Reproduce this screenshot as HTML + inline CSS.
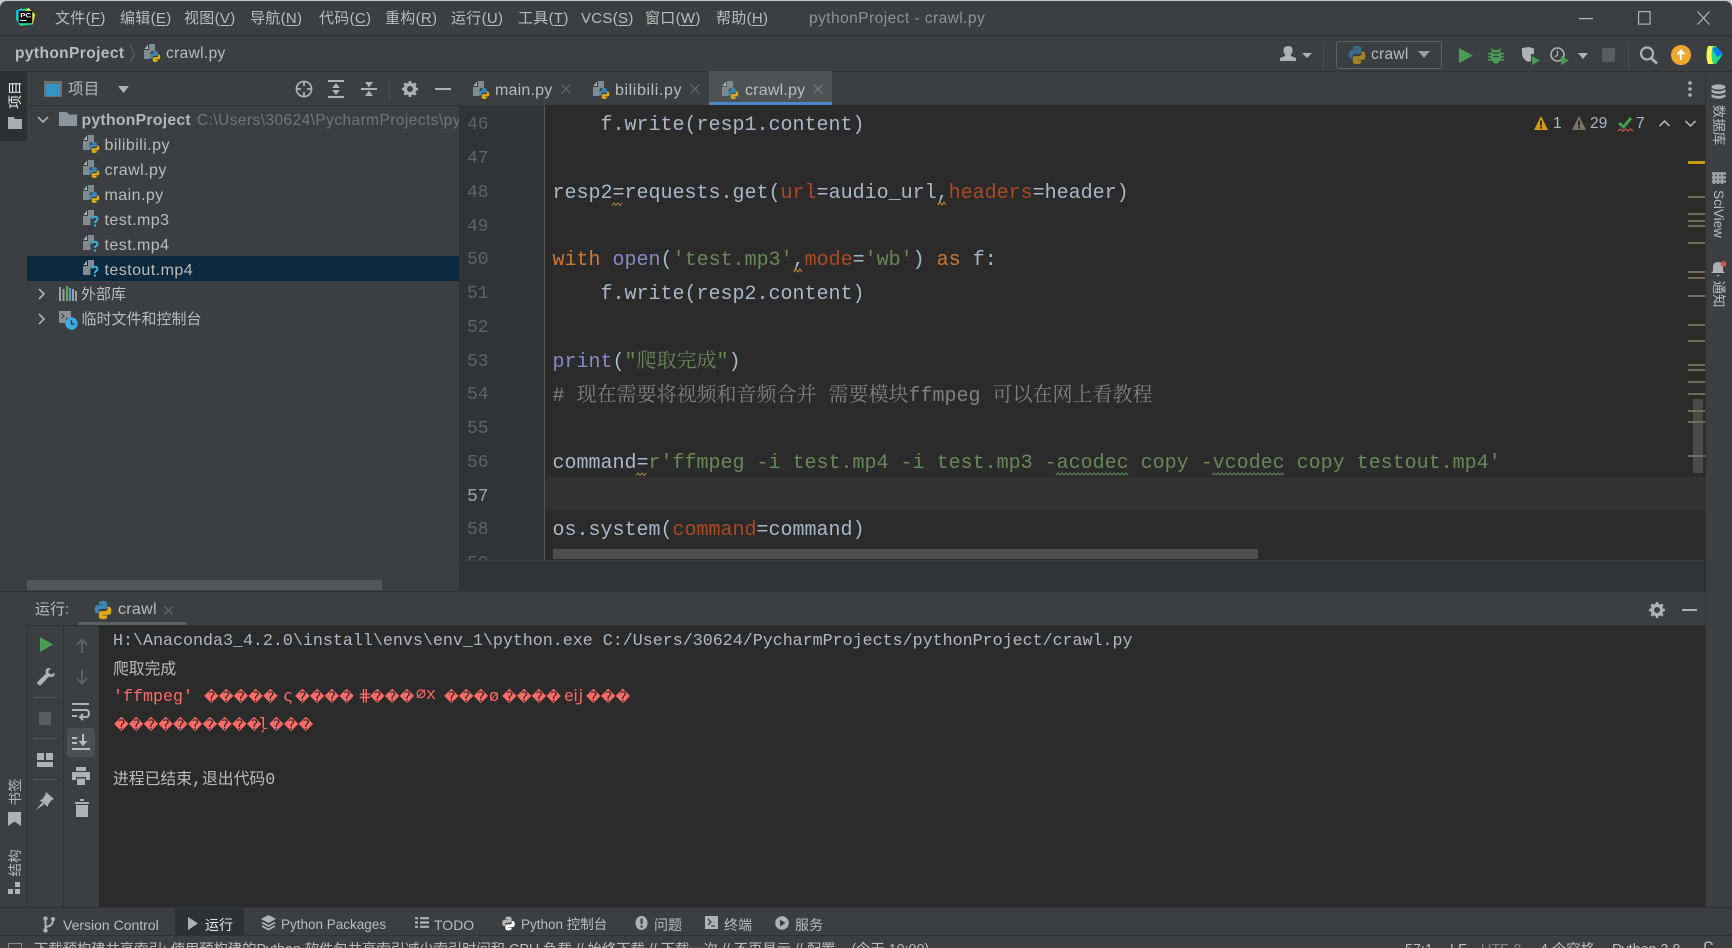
<!DOCTYPE html>
<html lang="zh"><head><meta charset="utf-8"><title>pythonProject - crawl.py</title>
<style>
html,body{margin:0;padding:0;background:#c9c9c9;width:1732px;height:948px;overflow:hidden}
#app{position:absolute;left:0;top:1px;width:1732px;height:947px;background:#3c3f41;border-radius:7px 7px 0 0;overflow:hidden;font-family:"Liberation Sans","Noto Sans CJK SC",sans-serif;font-size:15px;color:#bbb}
#app>*{position:absolute}
.b{position:absolute}
.t{position:absolute;white-space:nowrap;line-height:20px;height:20px;letter-spacing:.3px;font-size:15.5px}
#tree .t{margin-top:1px}
.menu{font-size:15px;letter-spacing:.3px}
.tab{font-size:16px;letter-spacing:.2px;margin-top:1px}
.bt{font-size:14px;letter-spacing:0;margin-top:.5px}
u{text-decoration-thickness:1px;text-underline-offset:2px}
svg{position:absolute;overflow:visible}
.ln{position:absolute;left:467px;width:40px;font:18px/33.75px "Liberation Mono",monospace;color:#606366;height:33.75px;white-space:pre;margin-top:3.5px}
.c{position:absolute;left:552.5px;font:20px/33.75px "Liberation Mono","Noto Sans CJK SC",monospace;color:#a9b7c6;white-space:pre;height:33.75px;margin-top:3.5px}
.k{color:#cc7832}.s{color:#6a8759}.n{color:#8888c6}.p{color:#aa4926}.g{color:#808080}
.cj{font-family:"Noto Serif CJK SC",serif}
.con{position:absolute;left:113px;font:16.67px/20px "Liberation Mono","Noto Sans CJK SC",monospace;white-space:pre;color:#bbb;height:20px}
.zh{font-family:"Noto Sans CJK SC",sans-serif;font-size:15.8px;font-weight:400}
.d{position:absolute;font:14.4px/20px "DejaVu Sans",sans-serif;color:#ff6b68;white-space:pre;height:20px}
.m{position:absolute;left:1688px;width:17px;height:2px;background:#736b55}
.rot{position:absolute;white-space:nowrap;font-size:13.5px;line-height:16px;color:#bbb}
</style></head><body>
<svg width="0" height="0" style="position:absolute"><defs>
<symbol id="py" viewBox="0 0 24 24"><path fill="#3a87b8" d="M11.9 1C6.9 1 7.2 3.2 7.2 3.2V5.5h4.8v.7H5.3S2 5.8 2 11s2.9 5 2.9 5h1.7v-2.4s-.1-2.9 2.9-2.9h4.8s2.7 0 2.7-2.6V4.2S17.5 1 11.9 1z"/><path fill="#e0a916" d="M12.1 23c5 0 4.7-2.2 4.7-2.2v-2.3H12v-.7h6.7S22 18.2 22 13s-2.9-5-2.9-5h-1.7v2.4s.1 2.9-2.9 2.9H9.7S7 13.3 7 15.9v3.9S6.5 23 12.1 23z"/></symbol>
<symbol id="pyd" viewBox="0 0 24 24"><path fill="#3a6a8a" d="M11.9 1C6.9 1 7.2 3.2 7.2 3.2V5.5h4.8v.7H5.3S2 5.8 2 11s2.9 5 2.9 5h1.7v-2.4s-.1-2.9 2.9-2.9h4.8s2.7 0 2.7-2.6V4.2S17.5 1 11.9 1z"/><path fill="#a08424" d="M12.1 23c5 0 4.7-2.2 4.7-2.2v-2.3H12v-.7h6.7S22 18.2 22 13s-2.9-5-2.9-5h-1.7v2.4s.1 2.9-2.9 2.9H9.7S7 13.3 7 15.9v3.9S6.5 23 12.1 23z"/></symbol>
<symbol id="pf" viewBox="0 0 18 18"><path fill="#7f8b91" d="M5 0H11V7H9Q6.5 7 6.5 9.5V15H0V6H5Z"/><path fill="#aeb5ba" d="M4 .5L.5 5H4Z"/><use href="#py" x="5" y="6.5" width="12.5" height="12"/></symbol>
<symbol id="qf" viewBox="0 0 18 18"><path fill="#7f8b91" d="M5 0H11V6.5H9Q7.5 7.5 7.5 10V15H0V6H5Z"/><path fill="#aeb5ba" d="M4 .5L.5 5H4Z"/><path fill="none" stroke="#3baedf" stroke-width="2" d="M9 8.6Q9.6 6.8 11.8 6.8Q14.4 6.8 14.4 9Q14.4 10.4 12.9 11.2Q11.9 11.8 11.9 13"/><rect x="10.9" y="14.4" width="2" height="2.2" fill="#3baedf"/></symbol>
</defs></svg>
<div id="app">
<!-- title bar -->
<div class="b" style="left:0;top:34px;width:1732px;height:1px;background:#323232"></div>
<svg style="left:15px;top:7px" width="21" height="18" viewBox="0 0 20 22" preserveAspectRatio="none"><path d="M1 3L13 0L19 8L17 20L5 22L1 14Z" fill="#21d789"/><path d="M13 0L19 8L17 20L10 4Z" fill="#fcf84a"/><path d="M1 3L7 0L3 20Z" fill="#07c3f2"/><rect x="3.5" y="3.5" width="13" height="15" fill="#000"/><text x="5" y="11.5" font-size="7.5" font-weight="bold" fill="#fff" font-family="Liberation Sans">PC</text><rect x="5" y="14.5" width="6" height="1.3" fill="#fff"/></svg>
<div class="t menu" style="left:55px;top:8px">文件(<u>F</u>)</div>
<div class="t menu" style="left:120px;top:8px">编辑(<u>E</u>)</div>
<div class="t menu" style="left:184px;top:8px">视图(<u>V</u>)</div>
<div class="t menu" style="left:250px;top:8px">导航(<u>N</u>)</div>
<div class="t menu" style="left:319px;top:8px">代码(<u>C</u>)</div>
<div class="t menu" style="left:385px;top:8px">重构(<u>R</u>)</div>
<div class="t menu" style="left:451px;top:8px">运行(<u>U</u>)</div>
<div class="t menu" style="left:518px;top:8px">工具(<u>T</u>)</div>
<div class="t menu" style="left:581px;top:8px">VCS(<u>S</u>)</div>
<div class="t menu" style="left:645px;top:8px">窗口(<u>W</u>)</div>
<div class="t menu" style="left:716px;top:8px">帮助(<u>H</u>)</div>
<div class="t" style="left:809px;top:8px;color:#8f9193;letter-spacing:.45px">pythonProject - crawl.py</div>
<svg style="left:1579px;top:17px" width="14" height="2"><rect width="14" height="1.2" fill="#bbb"/></svg>
<svg style="left:1638px;top:10px" width="13" height="14"><rect x=".6" y=".6" width="11.5" height="12.5" fill="none" stroke="#bbb" stroke-width="1.1"/></svg>
<svg style="left:1697px;top:10px" width="13" height="14"><path d="M.5.5L12.5 13.5M12.5.5L.5 13.5" stroke="#bbb" stroke-width="1.1"/></svg>
<!-- toolbar -->
<div class="b" style="left:0;top:70px;width:1732px;height:1px;background:#323232"></div>
<div class="t" style="left:15px;top:43px;font-weight:bold;letter-spacing:.4px;font-size:15.5px">pythonProject</div>
<svg style="left:129px;top:44px" width="7" height="18"><path d="M1 .5L5.5 9L1 17.5" fill="none" stroke="#5f6264"/></svg>
<svg style="left:144px;top:43px" width="18" height="18"><use href="#pf" width="18" height="18"/></svg>
<div class="t" style="left:166px;top:43px;letter-spacing:.35px">crawl.py</div>
<svg style="left:1280px;top:45px" width="32" height="16" viewBox="0 0 32 16"><path fill="#afb1b3" d="M8 0Q13 0 12.5 5Q12.3 7 11 8.5V10L16 12V15H0V12L5 10V8.5Q3.5 7 3.5 5Q3.2 0 8 0Z"/><path fill="#afb1b3" d="M22 7H32L27 12Z"/></svg>
<div class="b" style="left:1323px;top:42px;width:1px;height:24px;background:#4a4d4f"></div>
<div class="b" style="left:1336px;top:40px;width:104px;height:26px;border:1px solid #5e6264;border-radius:3px"></div>
<svg style="left:1347px;top:44px" width="20" height="20"><use href="#pyd" width="20" height="20"/></svg>
<div class="t" style="left:1371px;top:44px">crawl</div>
<svg style="left:1418px;top:50px" width="12" height="7"><path d="M0 0H12L6 7Z" fill="#9a9c9e"/></svg>
<svg style="left:1459px;top:47px" width="14" height="15"><path d="M0 0L14 7.5L0 15Z" fill="#499c54"/></svg>
<svg style="left:1487px;top:46px" width="18" height="17" viewBox="0 0 18 17"><path fill="#499c54" d="M5 1L7 3H11L13 1L14 2L12.5 4H13.5V6H17V7.5H14V9H17V10.5H14V12H17V13.5H13Q12 16.5 9 16.5Q6 16.5 5 13.5H1V12H4V10.5H1V9H4V7.5H1V6H4.5V4H5.5L4 2Z"/><path d="M6 6H12M6 9.5H12" stroke="#3c3f41" stroke-width="1.2"/></svg>
<svg style="left:1521px;top:46px" width="20" height="18" viewBox="0 0 20 18"><path fill="#afb1b3" d="M1 1L8 0L13 1.5V7H10V14L7 15Q1 12 1 6Z"/><path d="M11 9L19 13.5L11 18Z" fill="#499c54"/></svg>
<svg style="left:1550px;top:46px" width="20" height="18" viewBox="0 0 20 18"><circle cx="7.5" cy="7.5" r="6.5" fill="none" stroke="#afb1b3" stroke-width="1.6"/><path d="M7.5 3.5V8L5 10" fill="none" stroke="#afb1b3" stroke-width="1.3"/><path d="M11 9L19 13.5L11 18Z" fill="#499c54"/></svg>
<svg style="left:1578px;top:52px" width="10" height="6"><path d="M0 0H10L5 6Z" fill="#afb1b3"/></svg>
<div class="b" style="left:1602px;top:47px;width:13px;height:14px;background:#5a5d5f"></div>
<div class="b" style="left:1628px;top:42px;width:1px;height:24px;background:#4a4d4f"></div>
<svg style="left:1639px;top:45px" width="20" height="18"><circle cx="8" cy="7.5" r="6" fill="none" stroke="#afb1b3" stroke-width="2.2"/><path d="M12 12L18 17.5" stroke="#afb1b3" stroke-width="2.8"/></svg>
<svg style="left:1671px;top:44px" width="20" height="20"><circle cx="10" cy="10" r="10" fill="#f0a732"/><path d="M10 15V6M6.5 9.5L10 5.5L13.5 9.5" fill="none" stroke="#fff" stroke-width="2"/></svg>
<svg style="left:1705px;top:44px" width="19" height="20" viewBox="0 0 19 20"><path d="M3 1L11 1L18 9L11 19L3 19Q0 10 3 1Z" fill="#21d789"/><path d="M7 3L12 2L18 9L12 12Z" fill="#087cfa"/><path d="M3 1H8Q5 10 8 19H3Q0 10 3 1Z" fill="#fcf84a"/></svg>
<!-- tab row -->
<div class="b" style="left:0;top:104px;width:1705px;height:1px;background:#323232"></div>
<div class="b" style="left:0;top:70px;width:27px;height:70px;background:#2d2f30"></div>
<div class="rot" style="left:0;top:86px;width:30px;text-align:center;transform:rotate(-90deg);color:#e8e8e8;font-size:14px">项目</div>
<svg style="left:8px;top:116px" width="14" height="12"><path d="M0 0H6L7 2H14V12H0Z" fill="#a9adb0"/></svg>
<svg style="left:44px;top:80px" width="18" height="16"><rect width="18" height="16" fill="#6e7173"/><rect x="2" y="3" width="14" height="12" fill="#3592c4"/></svg>
<div class="t" style="left:68px;top:79px">项目</div>
<svg style="left:118px;top:85px" width="11" height="7"><path d="M0 0H11L5.5 7Z" fill="#afb1b3"/></svg>
<svg style="left:295px;top:79px" width="18" height="18"><circle cx="9" cy="9" r="7.6" fill="none" stroke="#afb1b3" stroke-width="1.6"/><path d="M9 1V6M9 12V17M1 9H6M12 9H17" stroke="#afb1b3" stroke-width="1.8"/></svg>
<svg style="left:328px;top:79px" width="16" height="18"><path d="M0 1H16M0 17H16" stroke="#afb1b3" stroke-width="2"/><path d="M8 3L12 8H4ZM8 15L12 10H4Z" fill="#afb1b3"/></svg>
<svg style="left:361px;top:79px" width="16" height="18"><path d="M0 9H16" stroke="#afb1b3" stroke-width="2"/><path d="M8 7.5L12 2H4ZM8 10.5L12 16H4Z" fill="#afb1b3"/></svg>
<div class="b" style="left:389px;top:78px;width:1px;height:22px;background:#4a4d4f"></div>
<svg style="left:402px;top:80px" width="16" height="16" viewBox="0 0 16 16"><circle cx="8" cy="8" r="4.7" fill="none" stroke="#afb1b3" stroke-width="3.4"/><path d="M8 0V3M8 13V16M0 8H3M13 8H16M2.3 2.3L4.4 4.4M11.6 11.6L13.7 13.7M13.7 2.3L11.6 4.4M4.4 11.6L2.3 13.7" stroke="#afb1b3" stroke-width="2.6"/></svg>
<div class="b" style="left:435px;top:87px;width:16px;height:2px;background:#afb1b3"></div>
<svg style="left:473px;top:80px" width="18" height="18"><use href="#pf" width="18" height="18"/></svg>
<div class="t tab" style="left:495px;top:79px">main.py</div>
<svg style="left:561px;top:83px" width="10" height="10"><path d="M.5.5L9.5 9.5M9.5.5L.5 9.5" stroke="#696c6e"/></svg>
<svg style="left:593px;top:80px" width="18" height="18"><use href="#pf" width="18" height="18"/></svg>
<div class="t tab" style="left:615px;top:79px;letter-spacing:.6px">bilibili.py</div>
<svg style="left:690px;top:83px" width="10" height="10"><path d="M.5.5L9.5 9.5M9.5.5L.5 9.5" stroke="#696c6e"/></svg>
<div class="b" style="left:709px;top:70px;width:123px;height:32px;background:#4e5254"></div>
<div class="b" style="left:709px;top:101px;width:123px;height:4px;background:#4a88c7"></div>
<svg style="left:722px;top:80px" width="18" height="18"><use href="#pf" width="18" height="18"/></svg>
<div class="t tab" style="left:745px;top:79px">crawl.py</div>
<svg style="left:813px;top:83px" width="10" height="10"><path d="M.5.5L9.5 9.5M9.5.5L.5 9.5" stroke="#7b7e80"/></svg>
<svg style="left:1688px;top:80px" width="4" height="16"><circle cx="2" cy="2" r="1.8" fill="#afb1b3"/><circle cx="2" cy="8" r="1.8" fill="#afb1b3"/><circle cx="2" cy="14" r="1.8" fill="#afb1b3"/></svg>
<!-- tree panel -->
<div id="tree" class="b" style="left:27px;top:105px;width:432px;height:486px;overflow:hidden;background:#3c3f41">
<svg style="left:10px;top:10px" width="12" height="8"><path d="M1 1L6 6L11 1" fill="none" stroke="#afb1b3" stroke-width="1.6"/></svg>
<svg style="left:32px;top:6px" width="18" height="14"><path d="M0 0H8L10 2.5H18V14H0Z" fill="#88959e"/></svg>
<div class="t" style="left:54.5px;top:4px;font-weight:bold;font-size:15.8px;letter-spacing:.25px;color:#b3b5b7">pythonProject</div>
<div class="t" style="left:170px;top:4px;color:#737679;font-size:15.4px;letter-spacing:.48px">C:\Users\30624\PycharmProjects\py</div>
<div class="b" style="left:0;top:150px;width:432px;height:25px;background:#0d293e"></div>
<svg style="left:56px;top:29px" width="18" height="18"><use href="#pf" width="18" height="18"/></svg><div class="t" style="left:77.5px;top:29px;font-size:16px;letter-spacing:.45px">bilibili.py</div>
<svg style="left:56px;top:54px" width="18" height="18"><use href="#pf" width="18" height="18"/></svg><div class="t" style="left:77.5px;top:54px;font-size:16px;letter-spacing:.45px">crawl.py</div>
<svg style="left:56px;top:79px" width="18" height="18"><use href="#pf" width="18" height="18"/></svg><div class="t" style="left:77.5px;top:79px;font-size:16px;letter-spacing:.45px">main.py</div>
<svg style="left:56px;top:104px" width="18" height="18"><use href="#qf" width="18" height="18"/></svg><div class="t" style="left:77.5px;top:104px;font-size:16px;letter-spacing:.45px">test.mp3</div>
<svg style="left:56px;top:129px" width="18" height="18"><use href="#qf" width="18" height="18"/></svg><div class="t" style="left:77.5px;top:129px;font-size:16px;letter-spacing:.45px">test.mp4</div>
<svg style="left:56px;top:154px" width="18" height="18"><use href="#qf" width="18" height="18"/></svg><div class="t" style="left:77.5px;top:154px;font-size:16px;letter-spacing:.45px">testout.mp4</div>
<svg style="left:11px;top:182px" width="8" height="12"><path d="M1 1L6 6L1 11" fill="none" stroke="#afb1b3" stroke-width="1.6"/></svg>
<svg style="left:32px;top:180px" width="18" height="15"><path d="M1 1V15M4.5 3V15M14 3V15M17 5V15" stroke="#9aa0a4" stroke-width="2"/><path d="M8 0V15" stroke="#6aa84f" stroke-width="2.2"/><path d="M11 2V15" stroke="#4c9fd0" stroke-width="2.2"/></svg>
<div class="t" style="left:54px;top:178px;letter-spacing:0;font-size:15px">外部库</div>
<svg style="left:11px;top:207px" width="8" height="12"><path d="M1 1L6 6L1 11" fill="none" stroke="#afb1b3" stroke-width="1.6"/></svg>
<svg style="left:32px;top:205px" width="19" height="19"><path d="M0 0H12V7H7V12H0Z" fill="#8a9095"/><path d="M2.5 2.5L5 5L2.5 7.5" stroke="#3c3f41" fill="none"/><circle cx="12.5" cy="12.5" r="6.2" fill="#3baedf"/><path d="M12.5 9V13H15.5" stroke="#3c3f41" stroke-width="1.4" fill="none"/></svg>
<div class="t" style="left:54.5px;top:203px;letter-spacing:0;font-size:15px">临时文件和控制台</div>
<div class="b" style="left:0;top:474px;width:355px;height:10px;background:#55585a"></div>
</div>
<div class="b" style="left:0;top:590px;width:1705px;height:1px;background:#323232"></div>
<!-- editor -->
<div class="b" style="left:459px;top:104px;width:85px;height:456px;background:#313335"></div>
<div class="b" style="left:544px;top:104px;width:1161px;height:456px;background:#2b2b2b"></div>
<div class="b" style="left:544px;top:104px;width:1px;height:456px;background:#555"></div>
<div class="b" style="left:545px;top:476px;width:1160px;height:34px;background:#323232"></div>
<div class="ln" style="top:104.75px">46</div>
<div class="ln" style="top:138.5px">47</div>
<div class="ln" style="top:172.25px">48</div>
<div class="ln" style="top:206px">49</div>
<div class="ln" style="top:239.75px">50</div>
<div class="ln" style="top:273.5px">51</div>
<div class="ln" style="top:307.25px">52</div>
<div class="ln" style="top:341px">53</div>
<div class="ln" style="top:374.75px">54</div>
<div class="ln" style="top:408.5px">55</div>
<div class="ln" style="top:442.25px">56</div>
<div class="ln" style="top:476px;color:#a4a3a3">57</div>
<div class="ln" style="top:509.75px">58</div>
<div class="ln" style="top:543.5px">59</div>
<div class="c" style="top:104.75px">    f.write(resp1.content)</div>
<div class="c" style="top:172.25px">resp2=requests.get(<span class="p">url</span>=audio_url,<span class="p">headers</span>=header)</div>
<div class="c" style="top:239.75px"><span class="k">with</span> <span class="n">open</span>(<span class="s">'test.mp3'</span>,<span class="p">mode</span>=<span class="s">'wb'</span>) <span class="k">as</span> f:</div>
<div class="c" style="top:273.5px">    f.write(resp2.content)</div>
<div class="c" style="top:341px;margin-top:0"><span class="n">print</span>(<span class="s">"<span class="cj">爬取完成</span>"</span>)</div>
<div class="c g" style="top:374.75px;margin-top:0;color:#808080"># <span class="cj">现在需要将视频和音频合并</span> <span class="cj">需要模块</span>ffmpeg <span class="cj">可以在网上看教程</span></div>
<div class="c" style="top:442.25px">command=<span class="s">r'ffmpeg -i test.mp4 -i test.mp3 -acodec copy -vcodec copy testout.mp4'</span></div>
<div class="c" style="top:509.75px">os.system(<span class="p">command</span>=command)</div>
<svg style="left:612px;top:201px" width="11" height="4"><path d="M0 3.5L2 1L4 3.5L6 1L8 3.5L10 1" fill="none" stroke="#a8874a"/></svg>
<svg style="left:937px;top:199px" width="11" height="6"><path d="M3 0L1 5M1 5L3 2L5 5L7 2L9 5" fill="none" stroke="#c6893a"/></svg>
<svg style="left:793px;top:266px" width="11" height="6"><path d="M3 0L1 5M1 5L3 2L5 5L7 2L9 5" fill="none" stroke="#c6893a"/></svg>
<svg style="left:636px;top:471px" width="11" height="4"><path d="M0 3.5L2 1L4 3.5L6 1L8 3.5L10 1" fill="none" stroke="#a8874a"/></svg>
<svg style="left:1056px;top:471px" width="72" height="4"><path d="M0 3L2 1L4 3L6 1L8 3L10 1L12 3L14 1L16 3L18 1L20 3L22 1L24 3L26 1L28 3L30 1L32 3L34 1L36 3L38 1L40 3L42 1L44 3L46 1L48 3L50 1L52 3L54 1L56 3L58 1L60 3L62 1L64 3L66 1L68 3L70 1L72 3" fill="none" stroke="#5f8a4f"/></svg>
<svg style="left:1212px;top:471px" width="72" height="4"><path d="M0 3L2 1L4 3L6 1L8 3L10 1L12 3L14 1L16 3L18 1L20 3L22 1L24 3L26 1L28 3L30 1L32 3L34 1L36 3L38 1L40 3L42 1L44 3L46 1L48 3L50 1L52 3L54 1L56 3L58 1L60 3L62 1L64 3L66 1L68 3L70 1L72 3" fill="none" stroke="#5f8a4f"/></svg>
<div class="b" style="left:553px;top:548px;width:705px;height:10px;background:#4f4f4f"></div>
<!-- inspection -->
<svg style="left:1534px;top:115px" width="14" height="14"><path d="M7 0L14 14H0Z" fill="#d19a0e"/><rect x="6" y="4.5" width="2" height="5" fill="#2b2b2b"/><rect x="6" y="10.5" width="2" height="2" fill="#2b2b2b"/></svg>
<div class="t" style="left:1553px;top:113px;color:#a9b7c6;font-size:15.5px">1</div>
<svg style="left:1572px;top:115px" width="14" height="14"><path d="M7 0L14 14H0Z" fill="#7a7360"/><rect x="6" y="4.5" width="2" height="5" fill="#2b2b2b"/><rect x="6" y="10.5" width="2" height="2" fill="#2b2b2b"/></svg>
<div class="t" style="left:1590px;top:113px;color:#a9b7c6;font-size:15.5px;letter-spacing:0">29</div>
<svg style="left:1618px;top:116px" width="15" height="15"><path d="M1 6L5.5 10L13 1" fill="none" stroke="#499c54" stroke-width="3"/><path d="M0 14L2.5 12L5 14L7.5 12L10 14L12.5 12L15 14" fill="none" stroke="#c75450" stroke-width="1.2"/></svg>
<div class="t" style="left:1636px;top:113px;color:#a9b7c6;font-size:15.5px">7</div>
<svg style="left:1659px;top:119px" width="11" height="7"><path d="M.5 6L5.5 1L10.5 6" fill="none" stroke="#afb1b3" stroke-width="1.6"/></svg>
<svg style="left:1685px;top:119px" width="11" height="7"><path d="M.5 1L5.5 6L10.5 1" fill="none" stroke="#afb1b3" stroke-width="1.6"/></svg>
<div class="b" style="left:1693px;top:398px;width:10px;height:74px;background:#4b4b4b"></div>
<div class="m" style="top:160px;height:3px;background:#c69c12"></div>
<div class="m" style="top:195px"></div><div class="m" style="top:212px"></div><div class="m" style="top:219px"></div><div class="m" style="top:224px"></div><div class="m" style="top:241px"></div><div class="m" style="top:270px"></div><div class="m" style="top:276px"></div><div class="m" style="top:294px"></div><div class="m" style="top:323px"></div><div class="m" style="top:339px"></div><div class="m" style="top:363px"></div><div class="m" style="top:368px"></div><div class="m" style="top:380px"></div><div class="m" style="top:392px"></div><div class="m" style="top:409px"></div><div class="m" style="top:420px"></div><div class="m" style="top:454px"></div>
<!-- gap under editor -->
<div class="b" style="left:459px;top:559px;width:1246px;height:1px;background:#3a3d3f"></div>
<div class="b" style="left:459px;top:560px;width:1246px;height:31px;background:#313335"></div>
<div class="b" style="left:459px;top:104px;width:0;height:486px;border-left:1px solid #323232"></div>
<!-- right sidebar -->
<div class="b" style="left:1705px;top:70px;width:1px;height:836px;background:#323232"></div>
<svg style="left:1711px;top:83px" width="15" height="16"><ellipse cx="7.5" cy="3" rx="7" ry="2.6" fill="#afb1b3"/><path d="M.5 5.5Q7.5 9 14.5 5.5V8.4Q7.5 11.6.5 8.4ZM.5 10.3Q7.5 13.6 14.5 10.3V13Q7.5 16.5.5 13Z" fill="#afb1b3"/></svg>
<div class="rot" style="left:1695px;top:116px;width:46px;text-align:center;transform:rotate(90deg)">数据库</div>
<svg style="left:1712px;top:171px" width="14" height="12"><path d="M0 1.5H14M0 5.5H14M0 9.5H14M2 0V12M6 0V12M10 0V12" stroke="#afb1b3" stroke-width="2.4" fill="none" opacity=".85"/></svg>
<div class="rot" style="left:1691px;top:205px;width:54px;text-align:center;transform:rotate(90deg)">SciView</div>
<svg style="left:1711px;top:260px" width="17" height="17"><path d="M7 1Q12 1 12 6V10L14 12H0L2 10V6Q2 1 7 1Z" fill="#afb1b3"/><path d="M5.5 14H8.5L7 16Z" fill="#afb1b3"/><circle cx="12.5" cy="3" r="2.8" fill="#d9534f"/></svg>
<div class="rot" style="left:1703px;top:285px;width:30px;text-align:center;transform:rotate(90deg)">通知</div>
<!-- run panel -->
<div class="b" style="left:27px;top:591px;width:1678px;height:33px;background:#3c3f41"></div>
<div class="t" style="left:35px;top:599px;letter-spacing:0;font-size:15px">运行:</div>
<svg style="left:93px;top:599px" width="20" height="20"><use href="#py" width="20" height="20"/></svg>
<div class="t" style="left:118px;top:599px;font-size:16px;letter-spacing:.3px">crawl</div>
<svg style="left:164px;top:605px" width="9" height="9"><path d="M.5.5L8.5 8.5M8.5.5L.5 8.5" stroke="#6d7072"/></svg>
<div class="b" style="left:78px;top:621px;width:109px;height:4px;background:#5d6063;border-radius:2px"></div>
<svg style="left:1649px;top:601px" width="16" height="16" viewBox="0 0 16 16"><circle cx="8" cy="8" r="4.7" fill="none" stroke="#afb1b3" stroke-width="3.4"/><path d="M8 0V3M8 13V16M0 8H3M13 8H16M2.3 2.3L4.4 4.4M11.6 11.6L13.7 13.7M13.7 2.3L11.6 4.4M4.4 11.6L2.3 13.7" stroke="#afb1b3" stroke-width="2.6"/></svg>
<div class="b" style="left:1682px;top:608px;width:15px;height:2px;background:#afb1b3"></div>
<div class="b" style="left:27px;top:624px;width:1678px;height:1px;background:#323232"></div>
<div class="b" style="left:27px;top:625px;width:1px;height:281px;background:#323232"></div>
<div class="b" style="left:63px;top:625px;width:1px;height:281px;background:#323232"></div>
<div class="b" style="left:99px;top:625px;width:1606px;height:281px;background:#2b2b2b"></div>
<svg style="left:40px;top:636px" width="13" height="15"><path d="M0 0L13 7.5L0 15Z" fill="#499c54"/></svg>
<svg style="left:37px;top:667px" width="18" height="18" viewBox="0 0 18 18"><path fill="#afb1b3" d="M12 0Q8.5 0 8.5 3.5Q8.5 5 9 5.5L0 14.5Q0 17 3.5 17.5L12 8.5Q13 9 14 9Q18 9 17.5 4.5L14.5 6.5L11.5 5L11.5 2.5L14 .5Q13 0 12 0Z"/></svg>
<div class="b" style="left:33px;top:696px;width:24px;height:1px;background:#55585a"></div>
<div class="b" style="left:39px;top:711px;width:12px;height:13px;background:#5a5d5f"></div>
<div class="b" style="left:33px;top:737px;width:24px;height:1px;background:#55585a"></div>
<svg style="left:37px;top:752px" width="16" height="14"><path d="M0 0H7V7H0ZM9 0H16V7H9ZM0 9H16V14H0Z" fill="#afb1b3"/></svg>
<div class="b" style="left:33px;top:778px;width:24px;height:1px;background:#55585a"></div>
<svg style="left:36px;top:791px" width="18" height="18" viewBox="0 0 18 18"><path fill="#afb1b3" d="M10 0L18 7L15 8.5L12 13L12 15L3.5 8L6 7.5L9 3.5Z"/><path d="M6 10.5L0 18L8 12.5Z" fill="#afb1b3"/></svg>
<svg style="left:76px;top:637px" width="12" height="15"><path d="M6 15V2M1 7L6 1.5L11 7" fill="none" stroke="#5d6062" stroke-width="2"/></svg>
<svg style="left:76px;top:669px" width="12" height="15"><path d="M6 0V13M1 8L6 13.5L11 8" fill="none" stroke="#5d6062" stroke-width="2"/></svg>
<svg style="left:72px;top:701px" width="18" height="18"><path d="M0 2H17M0 8H14Q17 8 17 11.5Q17 15 14 15H9M11 12L8 15L11 18M0 14H5" fill="none" stroke="#afb1b3" stroke-width="2"/></svg>
<div class="b" style="left:67px;top:727px;width:28px;height:29px;background:#4c5052;border-radius:3px"></div>
<svg style="left:72px;top:733px" width="18" height="17"><path d="M0 4H5M0 9H5M0 15H18" stroke="#bbb" stroke-width="2"/><path d="M11 0V9" stroke="#bbb" stroke-width="2"/><path d="M6.5 7H15.5L11 12Z" fill="#bbb"/></svg>
<svg style="left:72px;top:766px" width="18" height="18"><path d="M4 0H14V4H4ZM0 5H18V13H14V10H4V13H0ZM5 11.5H13V18H5Z" fill="#afb1b3"/></svg>
<svg style="left:75px;top:798px" width="14" height="18"><path d="M0 3H14V5H0ZM5 0H9V2H5ZM1 6H13V18H1Z" fill="#afb1b3"/></svg>
<div class="con" style="top:631px;color:#b0b8bf">H:\Anaconda3_4.2.0\install\envs\env_1\python.exe C:/Users/30624/PycharmProjects/pythonProject/crawl.py</div>
<div class="con zh" style="top:657px">爬取完成</div>
<div class="con" style="top:687px;color:#ff6b68">'ffmpeg'</div>
<div class="d" style="left:204px;top:687px">�����</div>
<div class="con" style="left:283px;top:687px;color:#ff6b68">ς</div>
<div class="d" style="left:295px;top:687px">����</div>
<div class="con" style="left:358px;top:687px;color:#ff6b68">⋕</div>
<div class="d" style="left:370px;top:687px">���</div>
<div class="con" style="left:416px;top:685px;color:#ff6b68">⌀x</div>
<div class="d" style="left:444px;top:687px">���</div>
<div class="con" style="left:489px;top:687px;color:#ff6b68">ø</div>
<div class="d" style="left:502px;top:687px">����</div>
<div class="con" style="left:564px;top:687px;color:#ff6b68;letter-spacing:-1px">eĳ</div>
<div class="d" style="left:586px;top:687px">���</div>
<div class="d" style="left:114px;top:715px">����������</div>
<div class="con" style="left:258px;top:715px;color:#ff6b68">ļ</div>
<div class="d" style="left:269px;top:715px">���</div>
<div class="con zh" style="top:767px">进程已结束<span style="font:16.67px 'Liberation Mono',monospace">,</span>退出代码<span style="font:16.67px 'Liberation Mono',monospace">0</span></div>
<!-- left sidebar bottom -->
<div class="rot" style="left:1px;top:783px;width:30px;text-align:center;transform:rotate(-90deg)">书签</div>
<svg style="left:8px;top:811px" width="13" height="14"><path d="M0 0H13V14L6.5 9.5L0 14Z" fill="#afb1b3"/></svg>
<div class="rot" style="left:1px;top:854px;width:30px;text-align:center;transform:rotate(-90deg)">结构</div>
<svg style="left:8px;top:881px" width="13" height="13"><path d="M7 0H12V5H7ZM0 7H5V12H0ZM7 7H12V12H7Z" fill="#afb1b3"/></svg>
<!-- bottom toolbar -->
<div class="b" style="left:0;top:906px;width:1732px;height:1px;background:#323232"></div>
<div class="b" style="left:0;top:934px;width:1732px;height:1px;background:#323232"></div>
<svg style="left:43px;top:915px" width="12" height="17"><path d="M2.5 1V16M2.5 11Q10 10 10 4" fill="none" stroke="#afb1b3" stroke-width="2"/><circle cx="2.5" cy="2.5" r="2.2" fill="#afb1b3"/><circle cx="10" cy="3" r="2" fill="#afb1b3"/><circle cx="2.5" cy="14.5" r="2.2" fill="#afb1b3"/></svg>
<div class="t bt" style="left:63px;top:913px">Version Control</div>
<div class="b" style="left:175px;top:907px;width:69px;height:27px;background:#2f3133"></div>
<svg style="left:188px;top:916px" width="10" height="13"><path d="M0 0L10 6.5L0 13Z" fill="#afb1b3"/></svg>
<div class="t bt" style="left:205px;top:913px;color:#e6e6e6">运行</div>
<svg style="left:261px;top:914px" width="15" height="17"><path d="M7.5 0L15 4L7.5 8L0 4Z" fill="#afb1b3"/><path d="M1 7.5L7.5 11L14 7.5M1 11L7.5 14.5L14 11" fill="none" stroke="#afb1b3" stroke-width="1.8"/></svg>
<div class="t bt" style="left:281px;top:913px;font-size:13.5px">Python Packages</div>
<svg style="left:415px;top:916px" width="14" height="11"><path d="M0 1.2H3M5 1.2H14M0 5.5H3M5 5.5H14M0 9.8H3M5 9.8H14" stroke="#afb1b3" stroke-width="2.2"/></svg>
<div class="t bt" style="left:434px;top:913px">TODO</div>
<svg style="left:501px;top:915px" width="15" height="15"><use href="#py" width="15" height="15" style="filter:grayscale(1) brightness(1.5)"/></svg>
<div class="t bt" style="left:521px;top:913px;font-size:13.5px">Python 控制台</div>
<svg style="left:635px;top:915px" width="13" height="14"><ellipse cx="6.5" cy="7" rx="6" ry="7" fill="#afb1b3"/><rect x="5.5" y="2.5" width="2.2" height="5.5" fill="#3c3f41"/><rect x="5.5" y="9.5" width="2.2" height="2.2" fill="#3c3f41"/></svg>
<div class="t bt" style="left:654px;top:913px">问题</div>
<svg style="left:705px;top:915px" width="13" height="13"><rect width="13" height="13" fill="#afb1b3"/><path d="M3 3L6 6L3 9M6 10H10" fill="none" stroke="#3c3f41" stroke-width="1.3"/></svg>
<div class="t bt" style="left:724px;top:913px">终端</div>
<svg style="left:775px;top:915px" width="15" height="14"><circle cx="7" cy="7" r="6.8" fill="#afb1b3"/><path d="M5 3.5L10.5 7L5 10.5Z" fill="#3c3f41"/></svg>
<div class="t bt" style="left:795px;top:913px">服务</div>
<!-- status bar -->
<svg style="left:8px;top:942px" width="14" height="14"><rect x=".5" y=".5" width="13" height="13" fill="none" stroke="#8a8d8f"/></svg>
<div class="t" style="left:34px;top:939px;font-size:14.3px;letter-spacing:0">下载预构建共享索引: 使用预构建的Python 软件包共享索引减少索引时间和 CPU 负载 // 始终下载 // 下载一次 // 不再显示 // 配置... (今天 10:00)</div>
<div class="t" style="left:1405px;top:939px;font-size:14.3px;letter-spacing:0">57:1</div>
<div class="t" style="left:1450px;top:939px;font-size:14.3px;letter-spacing:0">LF</div>
<div class="t" style="left:1481px;top:939px;font-size:14.3px;letter-spacing:0;color:#7f8284">UTF-8</div>
<div class="t" style="left:1540px;top:939px;font-size:14.3px;letter-spacing:0">4 个空格</div>
<div class="t" style="left:1612px;top:939px;font-size:14.3px;letter-spacing:0">Python 3.8</div>
<svg style="left:1703px;top:941px" width="11" height="12"><path d="M2 6V3Q2 0 5.5 0Q9 0 9 3" fill="none" stroke="#afb1b3" stroke-width="1.6"/><rect x="0" y="6" width="11" height="6" fill="#afb1b3"/></svg>
</div>
</body></html>
